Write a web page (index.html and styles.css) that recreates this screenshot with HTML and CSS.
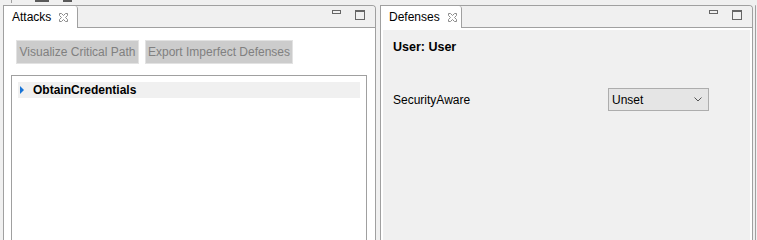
FILE: index.html
```html
<!DOCTYPE html>
<html>
<head>
<meta charset="utf-8">
<link rel="stylesheet" href="styles.css">
</head>
<body>
<div class="top">
  <span class="mark-line"></span>
  <span class="mark-bar one"></span>
  <span class="mark-bar two"></span>
</div>
<div class="row">
  <section class="panel left">
    <div class="header">
      <div class="tab">
        <span>Attacks</span>
        <svg class="close" width="9" height="9" viewBox="0 0 9 9"><polygon points="0.5,0.5 2.5,0.5 4.5,2.5 6.5,0.5 8.5,0.5 8.5,2.5 6.5,4.5 8.5,6.5 8.5,8.5 6.5,8.5 4.5,6.5 2.5,8.5 0.5,8.5 0.5,6.5 2.5,4.5 0.5,2.5" fill="none" stroke="#8c8c8c" stroke-width="1"/></svg>
      </div>
      <div class="tools">
        <span class="min"></span>
        <span class="max"></span>
      </div>
    </div>
    <div class="content attacks">
      <div class="buttons">
        <div class="btn b1">Visualize Critical Path</div>
        <div class="btn b2">Export Imperfect Defenses</div>
      </div>
      <div class="tree">
        <div class="tree-row">
          <span class="arrow"></span>
          <span class="node">ObtainCredentials</span>
        </div>
      </div>
    </div>
  </section>
  <section class="panel right">
    <div class="header">
      <div class="tab">
        <span>Defenses</span>
        <svg class="close" width="9" height="9" viewBox="0 0 9 9"><polygon points="0.5,0.5 2.5,0.5 4.5,2.5 6.5,0.5 8.5,0.5 8.5,2.5 6.5,4.5 8.5,6.5 8.5,8.5 6.5,8.5 4.5,6.5 2.5,8.5 0.5,8.5 0.5,6.5 2.5,4.5 0.5,2.5" fill="none" stroke="#8c8c8c" stroke-width="1"/></svg>
      </div>
      <div class="tools">
        <span class="min"></span>
        <span class="max"></span>
      </div>
    </div>
    <div class="content defenses">
      <div class="title">User: User</div>
      <div class="field">
        <span class="label">SecurityAware</span>
        <div class="combo">
          <span>Unset</span>
          <svg width="8" height="5" viewBox="0 0 8 5"><polyline points="0.5,0.5 4,4 7.5,0.5" fill="none" stroke="#555" stroke-width="1"/></svg>
        </div>
      </div>
    </div>
  </section>
  <div class="edge"></div>
</div>
</body>
</html>
```

FILE: styles.css
```css
html, body {
  margin: 0;
  height: 240px;
  overflow: hidden;
}
body {
  background: #f0f0f0;
  font-family: "Liberation Sans", Arial, sans-serif;
  font-size: 12px;
  color: #000;
}
.top {
  height: 5px;
  display: flex;
  align-items: flex-start;
}
.mark-line {
  width: 1px;
  height: 3px;
  background: #a0a0a0;
  margin-left: 11px;
}
.mark-bar {
  height: 2px;
  background: #5a5a5a;
}
.mark-bar.one {
  width: 14px;
  margin-left: 23px;
}
.mark-bar.two {
  width: 9px;
  margin-left: 14px;
}
.row {
  display: flex;
  padding-left: 3px;
  height: 235px;
}
.panel {
  border: 1px solid #a0a0a0;
  border-bottom: none;
  border-top-right-radius: 4px;
  display: flex;
  flex-direction: column;
  overflow: hidden;
}
.panel.left {
  width: 371px;
}
.panel.right {
  width: 371px;
  margin-left: 4px;
}
.edge {
  margin-left: 2px;
  width: 1px;
  background: #a0a0a0;
  border-top-right-radius: 2px;
}
.header {
  height: 21px;
  border-bottom: 1px solid #a0a0a0;
  display: flex;
  background: #f0f0f0;
}
.tab {
  height: 22px;
  margin-bottom: -1px;
  background: #fff;
  border-right: 1px solid #a0a0a0;
  border-top-right-radius: 3px;
  display: flex;
  align-items: center;
  padding: 0 8px;
  gap: 8px;
  box-sizing: border-box;
}
.left .tab {
  width: 74px;
}
.right .tab {
  width: 81px;
}
.close {
  display: block;
  flex: none;
}
.tools {
  margin-left: auto;
  display: flex;
  align-items: flex-start;
  gap: 14px;
  padding: 4px 10px 0 0;
}
.min {
  width: 9px;
  height: 4px;
  border: 1px solid #666;
  box-sizing: border-box;
}
.max {
  width: 10px;
  height: 10px;
  border: 1px solid #666;
  border-top-width: 2px;
  box-sizing: border-box;
}
.content {
  flex: 1;
}
.content.attacks {
  background: #fff;
  padding: 12px 8px 0 7px;
  display: flex;
  flex-direction: column;
}
.buttons {
  display: flex;
  gap: 6px;
  margin-left: 5px;
}
.btn {
  height: 24px;
  box-sizing: border-box;
  background: #cccccc;
  border: 1px solid #e2e2e2;
  color: #808080;
  display: flex;
  align-items: center;
  justify-content: center;
  white-space: nowrap;
}
.btn.b1 { width: 123px; }
.btn.b2 { width: 148px; }
.tree {
  margin-top: 11px;
  flex: 1;
  border: 1px solid #a0a0a0;
  border-bottom: none;
  padding: 6px 6px 0 6px;
}
.tree-row {
  height: 16px;
  background: #f0f0f0;
  display: flex;
  align-items: center;
}
.arrow {
  width: 0;
  height: 0;
  border-top: 4px solid transparent;
  border-bottom: 4px solid transparent;
  border-left: 4px solid #1874d6;
  margin-left: 2px;
}
.node {
  font-weight: bold;
  margin-left: 9px;
}
.content.defenses {
  background: #f0f0f0;
  border: 2px solid #fff;
  border-bottom: none;
  padding: 10px 10px 0 10px;
}
.title {
  font-weight: bold;
  font-size: 12.5px;
  line-height: 14px;
}
.field {
  display: grid;
  grid-template-columns: 215px 101px;
  align-items: center;
  margin-top: 34px;
}
.combo {
  height: 23px;
  box-sizing: border-box;
  background: #e5e5e5;
  border: 1px solid #adadad;
  display: flex;
  align-items: center;
  justify-content: space-between;
  padding: 0 6px 0 3px;
}
.combo svg {
  display: block;
}
```
